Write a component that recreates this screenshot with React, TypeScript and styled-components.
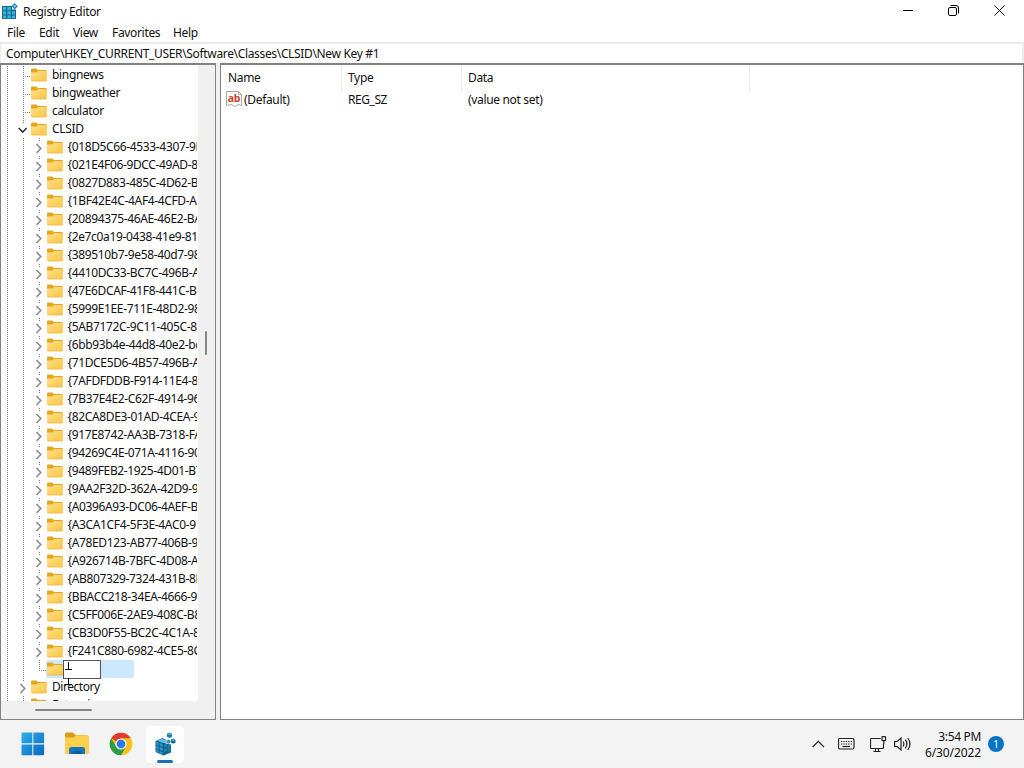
import React from 'react';
import styled, { createGlobalStyle } from 'styled-components';

const GlobalStyle = createGlobalStyle`
  * {
    box-sizing: border-box;
  }

  body {
    margin: 0;
    background: #fff;
    color: #111;
    font-family: 'Noto Sans', 'Open Sans', sans-serif;
    font-size: 12px;
    overflow: hidden;
  }
`;

const Screen = styled.div`
  display: flex;
  flex-direction: column;
  width: 1024px;
  height: 768px;
  background: #f0f0f0;
`;

const Text = styled.span<{ $spacing?: number }>`
  white-space: pre;
  letter-spacing: ${({ $spacing }) => $spacing ?? -0.33}px;
`;

/* ---------- window chrome ---------- */

const TitleBar = styled.header`
  display: flex;
  align-items: center;
  height: 23px;
  padding: 0 2px 0 2px;
  background: #fff;
  line-height: 22px;
`;

const Title = styled(Text)`
  flex: 1;
  padding: 1px 0 0 4px;
`;

const WindowButton = styled.button`
  display: flex;
  align-items: center;
  justify-content: center;
  width: 45.5px;
  height: 22px;
  padding: 0 0 2px;
  border: none;
  background: transparent;
`;

const MenuBar = styled.nav`
  display: flex;
  height: 19px;
  padding-left: 7px;
  background: #fff;
  line-height: 19px;
`;

const MenuItem = styled(Text)<{ $width: number }>`
  width: ${({ $width }) => $width}px;
`;

const AddressBar = styled.div`
  height: 21px;
  margin-right: 1px;
  padding-left: 5px;
  border: 1px solid #ebebeb;
  border-top-width: 2px;
  border-bottom: none;
  background: #fff;
  line-height: 19px;
`;

const Content = styled.main`
  display: flex;
  gap: 4px;
  height: 657px;
`;

const Pane = styled.section`
  border: 1px solid #828282;
  border-top-width: 2px;
  background: #fff;
`;

/* ---------- tree ---------- */

const TreePane = styled(Pane)`
  display: grid;
  grid-template: 636px 1fr / 197px 1fr;
  width: 216px;
  background: #f0f0f0;
`;

const TreeView = styled.div`
  padding-top: 1px;
  overflow: hidden;
  background: #fff;
`;

const TreeRow = styled.div`
  display: flex;
  align-items: center;
  height: 18px;
  margin: 0 1px 0 -2px;
  line-height: 18px;
`;

const dots = '#7d7d7d 0 1px, transparent 1px 2px';

const Guide = styled.span<{ $line?: 'full' | 'half'; $branch?: boolean }>`
  display: flex;
  flex: none;
  align-items: center;
  width: 16px;
  height: 18px;
  padding: 3px 0 0 3px;
  background-image: repeating-linear-gradient(to bottom, ${dots}),
    ${({ $branch }) => ($branch ? `repeating-linear-gradient(to right, ${dots})` : 'none')};
  background-position: 8px 0, 8px 10px;
  background-size: 1px ${({ $line }) => ($line === 'half' ? 10 : 18)}px, 7px 1px;
  background-repeat: no-repeat;
`;

const Arrow = styled.svg`
  flex: none;
  width: 10px;
  height: 15px;
  background: #fff;
`;

const Label = styled(Text)`
  padding-left: 5px;
`;

const ClassLabel = styled(Text)`
  flex: 1;
  min-width: 0;
  padding-left: 4.5px;
  overflow: hidden;
  letter-spacing: -0.36px;
`;

const Selection = styled.span`
  display: flex;
  align-items: center;
  position: relative;
  width: 88px;
  height: 18px;
  margin-left: -1px;
  padding-left: 1px;
  border-radius: 2px;
  background: #cce8ff;
`;

const RenameBox = styled.span`
  width: 38px;
  height: 19px;
  border: 1px solid #555;
  background: #fff;
`;

const TextCursor = styled.svg`
  position: absolute;
  left: 18px;
  top: 1px;
  width: 8px;
  height: 24px;
  z-index: 1;
`;

const VerticalTrack = styled.div`
  padding: 266px 0 0 7px;
`;

const VerticalThumb = styled.div`
  width: 2px;
  height: 24px;
  border-radius: 1px;
  background: #858585;
`;

const HorizontalTrack = styled.div`
  padding: 8px 0 0 34px;
`;

const HorizontalThumb = styled.div`
  width: 57px;
  height: 2px;
  border-radius: 1px;
  background: #858585;
`;

/* ---------- values ---------- */

const ValuePane = styled(Pane)`
  flex: 1;
`;

const ValueRow = styled.div<{ $header?: boolean }>`
  display: grid;
  grid-template-columns: 121px 120px 288px 1fr;
  height: ${({ $header }) => ($header ? 28 : 18)}px;
  line-height: ${({ $header }) => ($header ? 25 : 18)}px;
  margin-top: ${({ $header }) => ($header ? 0 : -2)}px;
`;

const HeaderCell = styled(Text)`
  padding-left: 6px;
  border-right: 1px solid #e8e8e8;

  &:first-child {
    padding-left: 7px;
  }
`;

const ValueCell = styled(Text)`
  display: flex;
  gap: 2px;
  padding-left: 6px;

  &:first-child {
    padding-left: 5px;
  }
`;

/* ---------- taskbar ---------- */

const Taskbar = styled.footer`
  display: flex;
  align-items: center;
  justify-content: space-between;
  height: 48px;
  padding: 0 20px 0 14px;
  background: #f3f3f3;
`;

const Apps = styled.div`
  display: flex;
  gap: 6px;
`;

const AppButton = styled.button<{ $active?: boolean }>`
  display: flex;
  flex-direction: column;
  align-items: center;
  justify-content: space-between;
  width: 38px;
  height: 37px;
  padding: 6px 0 0;
  border: none;
  border-radius: 4px;
  background: ${({ $active }) => ($active ? '#fdfdfd' : 'transparent')};

  &::after {
    content: '';
    width: 16px;
    height: 3px;
    border-radius: 2px;
    background: ${({ $active }) => ($active ? '#1a6fb5' : 'transparent')};
  }
`;

const Tray = styled.div`
  display: flex;
  align-items: center;
`;

const TrayIcon = styled.svg`
  fill: none;
  stroke: #222;
  stroke-width: 1.2;
`;

const Clock = styled.div`
  width: 69px;
  padding-top: 1px;
  text-align: right;
  line-height: 16px;
`;

const Badge = styled.span`
  width: 16px;
  height: 16px;
  margin-left: 7px;
  border-radius: 50%;
  background: #0a74c4;
  color: #fff;
  font-size: 10px;
  line-height: 16px;
  text-align: center;
`;

/* ---------- icons ---------- */

const Icon = styled.svg`
  flex: none;
`;

const FolderIcon = () => (
  <Icon width="16" height="16" viewBox="0 0 16 16">
    <defs>
      <linearGradient id="folder" x2="1" y2="1">
        <stop stopColor="#ffe08a" />
        <stop offset="1" stopColor="#fbc644" />
      </linearGradient>
    </defs>
    <path d="M0 2.700q0-1.200 1.200-1.200h4l1.800 1.600h7.600q1.200 0 1.200 1.200V8H0z" fill="#e5a51e" />
    <path d="M0 5.500h5.600L7.200 4h7.400q1.200 0 1.200 1.200v7.600q0 1.200-1.200 1.200H1.200Q0 14 0 12.800z" fill="url(#folder)" />
    <path d="M.3 13.200q.4.8 1.100.8h13.200q1.200 0 1.200-1.200" fill="none" stroke="#eab53e" strokeWidth=".8" />
  </Icon>
);

const RegistryIcon = () => (
  <Icon width="17" height="17" viewBox="0 0 17 17">
    <path d="M0 3h10v3.500h4V16H0z" fill="#1a6787" />
    <path d="M1 4h3v3.200H1zM5.300 4h3.500v3.200H5.300zM1 8.300h3v3.200H1zM5.300 8.300h3.500v3.200H5.300zM10 8.300h3v3.200h-3zM1 12.500h3v2.700H1zM5.300 12.500h3.500v2.700H5.300zM10 12.500h3v2.700h-3z" fill="#35b5e5" />
    <path d="M12.500 0 16 3.300 12.500 6.600 9.600 3.300z" fill="#2288b0" />
    <path d="m12.700 1.300 1.700 1.900-1.700 1.500-1.500-1.500z" fill="#68cdf0" />
  </Icon>
);

const StringIcon = () => (
  <Icon width="16" height="16" viewBox="0 0 16 16">
    <path d="M.5.5h12l3 3v11l-3-1-3.500 2-4-2-4.500 1z" fill="#fafafa" stroke="#a9a9a9" />
    <path d="M12.500.5v3h3" fill="none" stroke="#a9a9a9" />
    <text x="1.700" y="10.500" fontSize="10.500" fontWeight="700" fontFamily="Noto Sans" letterSpacing="-.3" fill="#c8452f">ab</text>
  </Icon>
);

const StartIcon = () => (
  <Icon width="24" height="24" viewBox="0 0 24 24">
    <defs>
      <linearGradient id="start" x2="1" y2="1">
        <stop stopColor="#2fb2ec" />
        <stop offset="1" stopColor="#0b66bd" />
      </linearGradient>
    </defs>
    <path d="M.5 1.500q0-1 1-1h9.800v10.800H.5zM12.300.5h9.800q1 0 1 1v9.800H12.300zM.5 12.400h10.800v10.800H1.500q-1 0-1-1zM12.300 12.400h10.800v9.800q0 1-1 1h-9.800z" fill="url(#start)" />
  </Icon>
);

const ExplorerIcon = () => (
  <Icon width="24" height="24" viewBox="0 0 24 24">
    <path d="M0 2q0-1.500 1.500-1.500h6.500l2.500 2.500H22V8H0z" fill="#d99b1c" />
    <path d="M0 5.500h8.500L11 3.200h11.500q1.500 0 1.500 1.500v15.800q0 1.500-1.500 1.500h-21Q0 22 0 20.500z" fill="#fdcf4f" />
    <path d="M4 22v-4.500q0-2.500 2.500-2.500h11q2.500 0 2.500 2.500V22z" fill="#1577bd" />
    <path d="M7.500 22v-2q0-1 1-1h7q1 0 1 1v2z" fill="#0d5d9c" />
  </Icon>
);

const ChromeIcon = () => (
  <Icon width="24" height="24" viewBox="0 0 24 24">
    <circle cx="12" cy="12" r="11.300" fill="#fbc116" />
    <path d="M12 12 2.200 6.350A11.300 11.300 0 0 1 21.800 6.350H12z" fill="#df3d30" />
    <path d="M2.200 6.350A11.300 11.300 0 0 0 12 23.300l4.900-8.500L12 12 7.100 14.800z" fill="#2a9c4b" />
    <circle cx="12" cy="12" r="5.600" fill="#fff" />
    <circle cx="12" cy="12" r="4.400" fill="#2e78e0" />
  </Icon>
);

const RegeditIcon = () => (
  <Icon width="22" height="24" viewBox="0 0 22 24">
    <path d="m1.500 9 7-3 3 1.500v4l5.500 1v8l-7.500 3-8-3.500z" fill="#15628c" />
    <path d="m2 9.500 2.800 1v3L2 12.500zM5.800 11l2.800 1v3l-2.800-1zM2 13.800l2.800 1v3l-2.800-1zM5.800 15l2.800 1v3l-2.800-1zM2 17.800l2.800 1v2l-2.800-1zM5.800 19.300l2.800 1v2l-2.800-1z" fill="#2793c6" />
    <path d="m3 8.500 5.500-1.800L11 8v3L8.800 11z" fill="#4fc3e8" />
    <path d="m10 12.500 2.800-.8v3l-2.800.9zM13.800 12.600l2.500.6v2.200l-2.500 1zM10 17l2.800-1v3l-2.800 1zM13.800 17l2.500-.9v3l-2.500.9z" fill="#1c7fb2" />
    <path d="m13 1.500 2.500-1L18 2v3l-2.500 1L13 4.800z" fill="#1c7fa9" />
    <path d="m17 7.500 2.500-1L21.500 8v2.800l-2.200 1L17 10.500z" fill="#176a98" />
    <path d="m13.500 2 2-.8 1.700.9-1.700.9zM17.500 8l2-.8 1.300.9-1.500.9z" fill="#65cdec" />
    <path d="m12.500 8.500 2-1 2 1.200v2.300l-2 .8-2-1z" fill="#2794bd" />
  </Icon>
);

const bingApps = ['bingnews', 'bingweather', 'calculator'];

const classIds = [
  '{018D5C66-4533-4307-9B53-224DE2ED1FE6}',
  '{021E4F06-9DCC-49AD-88CF-ECC2DA314C8A}',
  '{0827D883-485C-4D62-BA2C-A332DBF3D4B0}',
  '{1BF42E4C-4AF4-4CFD-A1A0-CF2960B8F63E}',
  '{20894375-46AE-46E2-BAFD-CB38975CDCE6}',
  '{2e7c0a19-0438-41e9-81e3-3ad3d64f55ba}',
  '{389510b7-9e58-40d7-98bf-60b911cb0ea9}',
  '{4410DC33-BC7C-496B-AA84-4AEA3EEE75F7}',
  '{47E6DCAF-41F8-441C-BD0E-A50D5FE6C4D1}',
  '{5999E1EE-711E-48D2-9884-851A709F543D}',
  '{5AB7172C-9C11-405C-8DD5-AF20F3606282}',
  '{6bb93b4e-44d8-40e2-bd97-42dbcf18a40f}',
  '{71DCE5D6-4B57-496B-AC21-CD5B54EB93FD}',
  '{7AFDFDDB-F914-11E4-8377-6C3BE50D980C}',
  '{7B37E4E2-C62F-4914-9620-8FB5062718CC}',
  '{82CA8DE3-01AD-4CEA-9D75-BE4C51810A9E}',
  '{917E8742-AA3B-7318-FA12-10485FB322A2}',
  '{94269C4E-071A-4116-90E6-52E557067E4E}',
  '{9489FEB2-1925-4D01-B788-6D912C70F7F2}',
  '{9AA2F32D-362A-42D9-9328-24A483E2CCC3}',
  '{A0396A93-DC06-4AEF-BEE9-95FFCCAEF20E}',
  '{A3CA1CF4-5F3E-4AC0-91B9-0D3716E1EAC3}',
  '{A78ED123-AB77-406B-9962-2A5D9D2F7F30}',
  '{A926714B-7BFC-4D08-A035-80021395FFA8}',
  '{AB807329-7324-431B-8B36-DBD581F56E0B}',
  '{BBACC218-34EA-4666-9D7A-C78F2274A524}',
  '{C5FF006E-2AE9-408C-B85B-2DFDD5449D9C}',
  '{CB3D0F55-BC2C-4C1A-85ED-23ED75B5106B}',
  '{F241C880-6982-4CE5-8CF7-7085BA96DA5A}',
];

const Expander: React.FC<{ open?: boolean }> = ({ open }) => (
  <Arrow viewBox="0 0 10 15">
    <path
      d={open ? 'M.7 5l4 4 4-4' : 'M2.500 3l4.300 4.500-4.300 4.500'}
      fill="none"
      stroke={open ? '#333' : '#8a8a8a'}
      strokeWidth="1.600"
    />
  </Arrow>
);

const App: React.FC = () => (
  <>
    <GlobalStyle />
    <Screen>
      <TitleBar>
        <RegistryIcon />
        <Title>Registry Editor</Title>
        <WindowButton aria-label="Minimize">
          <svg width="11" height="11"><path d="M0 5.500h10" stroke="#000" /></svg>
        </WindowButton>
        <WindowButton aria-label="Restore">
          <svg width="11" height="11" fill="none" stroke="#000">
            <rect x=".5" y="2.500" width="8" height="8" rx="1.500" />
            <path d="M2.500.5H8q2.500 0 2.500 2.500v5.500" />
          </svg>
        </WindowButton>
        <WindowButton aria-label="Close">
          <svg width="11" height="11"><path d="m.5.5 10 10m0-10-10 10" stroke="#000" /></svg>
        </WindowButton>
      </TitleBar>

      <MenuBar>
        <MenuItem $width={32}>File</MenuItem>
        <MenuItem $width={34}>Edit</MenuItem>
        <MenuItem $width={39}>View</MenuItem>
        <MenuItem $width={61}>Favorites</MenuItem>
        <MenuItem $width={30}>Help</MenuItem>
      </MenuBar>

      <AddressBar>
        <Text $spacing={-0.34}>Computer\HKEY_CURRENT_USER\Software\Classes\CLSID\New Key #1</Text>
      </AddressBar>

      <Content>
        <TreePane>
          <TreeView>
            {bingApps.map((name) => (
              <TreeRow key={name}>
                <Guide />
                <Guide $branch />
                <FolderIcon />
                <Label>{name}</Label>
              </TreeRow>
            ))}
            <TreeRow>
              <Guide />
              <Guide><Expander open /></Guide>
              <FolderIcon />
              <Label>CLSID</Label>
            </TreeRow>
            {classIds.map((id) => (
              <TreeRow key={id}>
                <Guide />
                <Guide />
                <Guide><Expander /></Guide>
                <FolderIcon />
                <ClassLabel>{id}</ClassLabel>
              </TreeRow>
            ))}
            <TreeRow>
              <Guide />
              <Guide />
              <Guide $line="half" $branch />
              <Selection>
                <FolderIcon />
                <RenameBox />
                <TextCursor viewBox="0 0 8 24">
                  <path d="M4.500 1v7M1 8.500h7M4.500 17v6M1 23.500h7" stroke="#000" />
                </TextCursor>
              </Selection>
            </TreeRow>
            <TreeRow>
              <Guide />
              <Guide><Expander /></Guide>
              <FolderIcon />
              <Label $spacing={-0.45}>Directory</Label>
            </TreeRow>
            <TreeRow>
              <Guide />
              <Guide $branch />
              <FolderIcon />
              <Label>Extensions</Label>
            </TreeRow>
          </TreeView>
          <VerticalTrack><VerticalThumb /></VerticalTrack>
          <HorizontalTrack><HorizontalThumb /></HorizontalTrack>
        </TreePane>

        <ValuePane>
          <ValueRow $header>
            <HeaderCell>Name</HeaderCell>
            <HeaderCell>Type</HeaderCell>
            <HeaderCell>Data</HeaderCell>
          </ValueRow>
          <ValueRow>
            <ValueCell><StringIcon />(Default)</ValueCell>
            <ValueCell $spacing={-0.45}>REG_SZ</ValueCell>
            <ValueCell>(value not set)</ValueCell>
          </ValueRow>
        </ValuePane>
      </Content>

      <Taskbar>
        <Apps>
          <AppButton aria-label="Start"><StartIcon /></AppButton>
          <AppButton aria-label="File Explorer"><ExplorerIcon /></AppButton>
          <AppButton aria-label="Google Chrome"><ChromeIcon /></AppButton>
          <AppButton aria-label="Registry Editor" $active><RegeditIcon /></AppButton>
        </Apps>
        <Tray>
          <TrayIcon width="13" height="8"><path d="m.7 7 5.600-5.700L12 7" /></TrayIcon>
          <TrayIcon width="17" height="12" style={{ marginLeft: 13 }}>
            <rect x=".5" y=".5" width="15.500" height="10.500" rx="1.500" />
            <path d="M3 3.500h11M3 6h11" strokeDasharray="1.300 1.100" />
            <path d="M4.500 8.500h7.500" />
          </TrayIcon>
          <TrayIcon width="17" height="17" style={{ marginLeft: 15 }}>
            <path d="M10.500 2.500h-9q-1 0-1 1v8q0 1 1 1h11q1 0 1-1V8M5.500 12.500v3M8.500 12.500v3M3.500 15.500h7" />
            <rect x="12" y=".7" width="3.600" height="4" rx=".8" />
            <path d="M13.800 4.700V8" />
          </TrayIcon>
          <TrayIcon width="18" height="16" style={{ marginLeft: 7 }}>
            <path d="M.6 5.500h2.600L7 2v12L3.200 10.500H.6zM9 5.500q1.800 2.500 0 5M11.300 3.700q3.200 4.300 0 8.600M13.700 2q4.600 6 0 12" />
          </TrayIcon>
          <Clock>
            <Text>3:54 PM</Text>
            <br />
            <Text $spacing={-0.1}>6/30/2022</Text>
          </Clock>
          <Badge>1</Badge>
        </Tray>
      </Taskbar>
    </Screen>
  </>
);

export default App;
